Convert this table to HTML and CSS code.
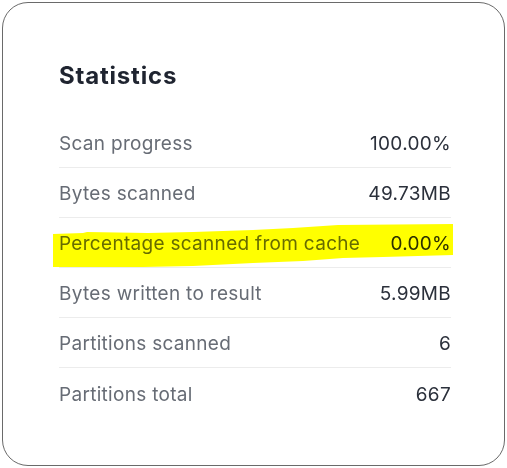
FILE: index.html
```html
<html lang="en">
<head>
    <meta charset="UTF-8">
    <meta name="viewport" content="width=device-width, initial-scale=1.0">
    <title>Statistics</title>
    <link rel="stylesheet" href="styles.css">
</head>
<body>
    <div class="card">
        <h2>Statistics</h2>

        <div class="stats">
            <div class="row">
                <span class="label">Scan progress</span>
                <span class="value">100.00%</span>
            </div>
            <div class="row">
                <span class="label">Bytes scanned</span>
                <span class="value">49.73MB</span>
            </div>
            <div class="row">
                <span class="label">Percentage scanned from cache</span>
                <span class="value">0.00%</span>
            </div>
            <div class="row">
                <span class="label">Bytes written to result</span>
                <span class="value">5.99MB</span>
            </div>
            <div class="row">
                <span class="label">Partitions scanned</span>
                <span class="value">6</span>
            </div>
            <div class="row">
                <span class="label">Partitions total</span>
                <span class="value">667</span>
            </div>
        </div>

        <!-- highlighter mark over the cache row -->
        <svg class="marker" width="402" height="46" viewBox="0 0 402 46">
            <polygon points="0,10 30,9 34,8 95,9 140,8 200,6 240,4 285,1 400,0 400,31 330,33 290,34 250,37 200,39 140,42 90,43 0,43" fill="#ffff00"/>
        </svg>
    </div>
</body>
</html>
```

FILE: styles.css
```css
body {
    margin: 0;
    padding: 2px;
    font-family: 'Inter', 'Noto Sans', sans-serif;
    background: #fff;
}
.card {
    position: relative;
    box-sizing: border-box;
    width: 503px;
    height: 464px;
    border: 1.5px solid #6a6a6a;
    border-radius: 26px;
    padding: 53px 53px 0 56px;
}
h2 {
    margin: 0 0 22px;
    font-size: 24px;
    font-weight: 700;
    letter-spacing: 0.8px;
    color: #1f2430;
    line-height: 40px;
}
.row {
    box-sizing: border-box;
    display: flex;
    justify-content: space-between;
    align-items: center;
    height: 50px;
    padding-top: 2px;
    border-bottom: 1px solid #ececec;
    font-size: 19px;
    letter-spacing: 0.3px;
}
.row:last-child {
    border-bottom: none;
}
.label {
    color: #676c75;
}
.value {
    color: #2b303b;
}
.marker {
    position: absolute;
    left: 50px;
    top: 221px;
    mix-blend-mode: multiply;
}
```
